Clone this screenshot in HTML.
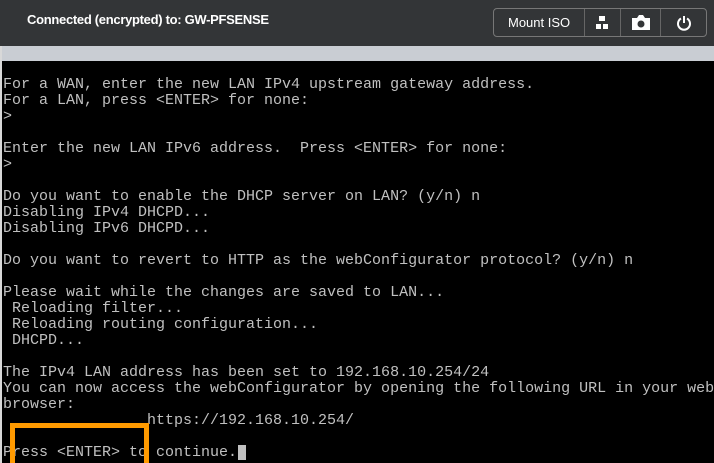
<html><head><style>
html,body{margin:0;width:714px;height:463px;overflow:hidden;background:#000}
body{position:relative;font-family:"Liberation Sans",sans-serif}
#hdr{position:absolute;left:0;top:0;width:714px;height:46px;background:#333537}
#hdr .t{position:absolute;left:27px;top:12px;color:#fff;font-weight:bold;font-size:13px;letter-spacing:-0.3px}
#grp{position:absolute;left:493px;top:8px;width:212px;height:27px;border:1px solid #777;border-radius:4px;display:flex;color:#fff}
#grp div{display:flex;align-items:center;justify-content:center;border-left:1px solid #666;height:27px}
#grp div:first-child{border-left:none}
#band{position:absolute;left:0;top:46px;width:714px;height:15px;background:#c9cdd3}
#term{position:absolute;left:3px;top:77px;color:#c0c0c0;font-family:"Liberation Mono",monospace;font-size:15px;line-height:16px;white-space:pre;margin:0}
#edge{position:absolute;left:0;top:46px;width:2px;height:417px;background:#d8d8d8}
#box{position:absolute;left:10px;top:423px;width:129px;height:40px;border:5px solid #ff9a00;border-bottom:none}
#cur{position:absolute;left:238px;top:445px;width:8px;height:15px;background:#c0c0c0}
</style></head><body>
<div id="hdr"><div class="t">Connected (encrypted) to: GW-PFSENSE</div>
<div id="grp">
<div style="width:91px;font-size:13px">Mount ISO</div>
<div style="width:35px"><svg width="12" height="14" viewBox="0 0 12 14"><rect x="3" y="0" width="6" height="5" fill="#fff"/><rect x="0" y="8" width="5" height="5" fill="#fff"/><rect x="7" y="8" width="5" height="5" fill="#fff"/></svg></div>
<div style="width:40px"><svg width="18" height="15" viewBox="0 0 18 15"><path d="M0 3h5l2-3h4l2 3h5v12H0z" fill="#fff"/><circle cx="9" cy="9" r="3.5" fill="#333537"/></svg></div>
<div style="width:45px;border-left:1px solid #666"><svg width="16" height="16" viewBox="0 0 16 16"><path d="M5 3.5A6 6 0 1 0 11 3.5" stroke="#fff" stroke-width="2" fill="none"/><path d="M8 1v7" stroke="#fff" stroke-width="2"/></svg></div>
</div></div>
<div id="band"></div>
<pre id="term">For a WAN, enter the new LAN IPv4 upstream gateway address.
For a LAN, press &lt;ENTER&gt; for none:
&gt;

Enter the new LAN IPv6 address.  Press &lt;ENTER&gt; for none:
&gt;

Do you want to enable the DHCP server on LAN? (y/n) n
Disabling IPv4 DHCPD...
Disabling IPv6 DHCPD...

Do you want to revert to HTTP as the webConfigurator protocol? (y/n) n

Please wait while the changes are saved to LAN...
 Reloading filter...
 Reloading routing configuration...
 DHCPD...

The IPv4 LAN address has been set to 192.168.10.254/24
You can now access the webConfigurator by opening the following URL in your web
browser:
                https://192.168.10.254/

Press &lt;ENTER&gt; to continue.</pre>
<div id="cur"></div>
<div id="edge"></div>
<div id="box"></div>
</body></html>
